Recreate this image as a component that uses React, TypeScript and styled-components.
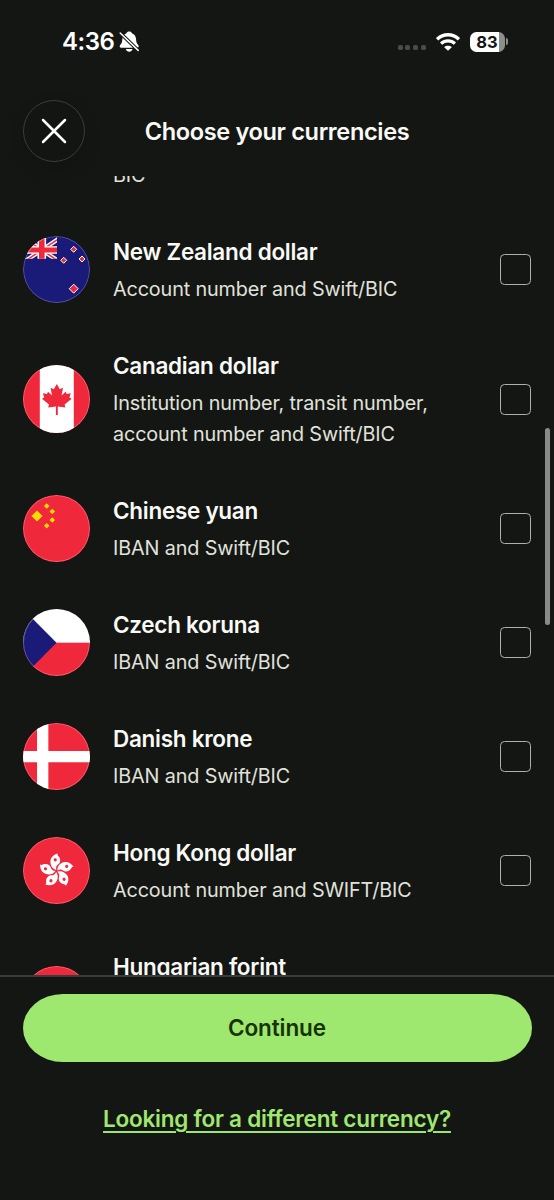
import React from "react";
import styled, { createGlobalStyle } from "styled-components";

const GlobalStyle = createGlobalStyle`
  * { box-sizing: border-box; }
  html, body { margin: 0; background: #141613; }
  body { font-family: Inter, "Liberation Sans", sans-serif; color: #f9faf6; }
`;

const Screen = styled.div`
  width: 554px;
  height: 1200px;
  display: flex;
  flex-direction: column;
  overflow: hidden;
  background: #141613;
`;

const StatusBar = styled.header`
  height: 82px;
  flex: none;
  display: flex;
  align-items: center;
  justify-content: space-between;
  padding: 1px 46.5px 0 62px;
`;

const StatusGroup = styled.div`
  display: flex;
  align-items: center;
`;

const Clock = styled.span`
  font-size: 24px;
  font-weight: 600;
  line-height: 30px;
  letter-spacing: -0.5px;
  margin-right: 5px;
  padding-top: 1px;
  color: #fff;
`;

const Dots = styled.div`
  display: flex;
  gap: 2.6px;
  margin: 12px 10px 0 0;
`;

const Dot = styled.i`
  width: 5px;
  height: 5px;
  border-radius: 1.8px;
  background: #4a4c49;
`;

const BatteryWrap = styled.div`
  display: flex;
  align-items: center;
  gap: 1px;
  margin-left: 10px;
`;

const Battery = styled.div`
  width: 35px;
  height: 20px;
  border-radius: 6.5px;
  background: linear-gradient(90deg, #fff 29px, #8d8e8c 29px);
  color: #141613;
  font-size: 16.5px;
  font-weight: 700;
  line-height: 20px;
  text-align: center;
`;

const BatteryNub = styled.i`
  width: 2px;
  height: 7px;
  border-radius: 0 3px 3px 0;
  background: #8d8e8c;
`;

const TitleBar = styled.div`
  height: 94px;
  flex: none;
  display: grid;
  grid-template-columns: 62px 1fr 62px;
  align-items: start;
  padding: 18px 22.5px 0;
`;

const CloseButton = styled.button`
  width: 62px;
  height: 62px;
  display: grid;
  place-items: center;
  padding: 0;
  border: 1px solid #3b3d3a;
  border-radius: 50%;
  background: #131512;
  box-shadow: 0 6px 16px rgba(0, 0, 0, 0.14);
`;

const Title = styled.h1`
  margin: 0;
  font-size: 23.6px;
  font-weight: 600;
  line-height: 64px;
  letter-spacing: -0.37px;
  text-align: center;
  white-space: nowrap;
`;

const ListFrame = styled.main`
  position: relative;
  height: 799px;
  flex: none;
  overflow: hidden;
`;

const ScrollThumb = styled.div`
  position: absolute;
  top: 251.5px;
  right: 4px;
  width: 5px;
  height: 197px;
  border-radius: 3px;
  background: #8a8b89;
`;

const Row = styled.div<{ $lines: number }>`
  height: ${(p) => 83 + p.$lines * 31}px;
  display: flex;
  align-items: center;
  padding: 0 23px 0 22.5px;
`;

const RowTail = styled.div`
  height: 36.5px;
  display: flex;
  align-items: flex-end;
  padding: 0 22px 21.6px 113px;
`;

const FlagFrame = styled.div`
  position: relative;
  width: 67.5px;
  height: 67.5px;
  flex: none;
  border-radius: 50%;
  overflow: hidden;
  svg { display: block; }
  &::after {
    content: "";
    position: absolute;
    inset: 0;
    border-radius: 50%;
    border: 1.3px solid rgba(255, 255, 255, 0.27);
  }
`;

const RowText = styled.div`
  flex: 1;
  align-self: flex-start;
  padding-top: 22.7px;
  margin-left: 23px;
`;

const CurrencyName = styled.h2`
  margin: 0 0 4.8px;
  font-size: 22.5px;
  font-weight: 600;
  line-height: 34px;
  letter-spacing: -0.28px;
`;

const Detail = styled.p`
  margin: 0;
  font-size: 19.8px;
  font-weight: 400;
  line-height: 31px;
  letter-spacing: -0.13px;
  color: #e0e2dc;
  white-space: pre-line;
`;

const Checkbox = styled.span`
  width: 31px;
  height: 31px;
  flex: none;
  border: 1.5px solid #aeb0ac;
  border-radius: 4.5px;
`;

const Footer = styled.footer`
  flex: 1;
  border-top: 2px solid #3a3c39;
  padding: 17px 22.5px 0;
  display: flex;
  flex-direction: column;
  align-items: center;
`;

const ContinueButton = styled.button`
  width: 100%;
  height: 68px;
  border: 0;
  padding: 0 0 1px;
  border-radius: 40px / 34px;
  background: #9fe870;
  color: #163300;
  font: 600 22.5px/66px Inter, "Liberation Sans", sans-serif;
  letter-spacing: -0.1px;
`;

const HelpLink = styled.a`
  margin-top: 41px;
  font-size: 22.5px;
  font-weight: 600;
  line-height: 32px;
  letter-spacing: -0.23px;
  color: #9fe870;
  text-decoration: underline;
  text-decoration-thickness: 1.6px;
  text-underline-offset: 3.5px;
  white-space: nowrap;
`;

const RED = "#f0283c";
const BLUE = "#1a1a78";

const Flag = ({ children }: { children: React.ReactNode }) => (
  <FlagFrame>
    <svg width="67.5" height="67.5" viewBox="0 0 67.5 67.5">{children}</svg>
  </FlagFrame>
);

const diamond = (x: number, y: number, r: number) =>
  `M${x} ${y - r}L${x + r} ${y}L${x} ${y + r}L${x - r} ${y}Z`;

const NewZealand = () => (
  <Flag>
    <rect width="68" height="68" fill={BLUE} />
    <svg width="34" height="22.8" viewBox="0 0 34 22.8">
      <path d="M0.8 2L36.8 26M36.8 2L0.8 26" stroke="#fff" strokeWidth="4.2" />
      <path d="M0.8 2L36.8 26M36.8 2L0.8 26" stroke={RED} strokeWidth="1.5" />
      <path d="M18.8 0V23" stroke="#fff" strokeWidth="8.6" />
      <path d="M0 14H34" stroke="#fff" strokeWidth="7.6" />
      <path d="M18.8 0V23" stroke={RED} strokeWidth="5.6" />
      <path d="M0 14H34" stroke={RED} strokeWidth="4.8" />
    </svg>
    {[[50.7, 13.3, 3], [40.7, 24.3, 3], [59, 23, 3], [50.7, 52.7, 4.5]].map(([x, y, r]) => (
      <path key={`${x}-${y}`} d={diamond(x, y, r)} fill={RED} stroke="#fff" strokeWidth="1" />
    ))}
  </Flag>
);

const Canada = () => (
  <Flag>
    <rect width="68" height="68" fill={RED} />
    <rect x="16.8" width="34" height="68" fill="#fff" />
    <path
      fill={RED}
      d="M33.8 19L30.8 24.2L27.6 22.7L29 30.6L25 26.8L24 29L19.9 28.2L21.2 32.5L19 33.8L26 39.6L25.2 42.6L32.9 41.5V50H34.8V41.5L42.4 42.6L41.6 39.6L48.7 33.8L46.4 32.5L47.7 28.2L43.7 29L42.6 26.8L38.6 30.6L40 22.7L36.8 24.2Z"
    />
  </Flag>
);

const China = () => (
  <Flag>
    <rect width="68" height="68" fill={RED} />
    {[[14, 21, 5.6], [23.7, 11, 2.8], [29.3, 16.5, 2.8], [29.3, 25, 2.8], [23.7, 30.7, 2.8]].map(([x, y, r]) => (
      <path key={`${x}-${y}`} d={diamond(x, y, r)} fill="#ffda00" />
    ))}
  </Flag>
);

const Czechia = () => (
  <Flag>
    <rect width="68" height="34" fill="#fff" />
    <rect y="33.7" width="68" height="34" fill={RED} />
    <path d="M0 0L33.5 33.7L0 67.5Z" fill={BLUE} />
  </Flag>
);

const Denmark = () => (
  <Flag>
    <rect width="68" height="68" fill={RED} />
    <path d="M19.7 0V68M0 33.7H68" stroke="#fff" strokeWidth="11.3" />
  </Flag>
);

const HongKong = () => (
  <Flag>
    <rect width="68" height="68" fill={RED} />
    {[0, 72, 144, 216, 288].map((angle) => (
      <g key={angle} transform={`rotate(${angle - 6} 33.5 34)`}>
        <path
          fill="#fff"
          d="M33.4 33C29.8 31.5 28 28 28.4 24.2C28.8 20.2 31.8 17.6 36.4 16.6C35.9 18 36.6 18.7 37.4 20C39.2 23 38.2 26.4 35.6 27.8C34 28.8 33 30.5 33.4 33Z"
        />
        <circle cx="33.4" cy="22.8" r="1.6" fill={RED} />
      </g>
    ))}
  </Flag>
);

const Hungary = () => (
  <Flag>
    <rect width="68" height="68" fill={RED} />
    <rect y="22.5" width="68" height="45" fill="#fff" />
    <rect y="45" width="68" height="23" fill="#4b8b3b" />
  </Flag>
);

const currencies = [
  { name: "New Zealand dollar", detail: "Account number and Swift/BIC", lines: 1, flag: <NewZealand /> },
  { name: "Canadian dollar", detail: "Institution number, transit number,\naccount number and Swift/BIC", lines: 2, flag: <Canada /> },
  { name: "Chinese yuan", detail: "IBAN and Swift/BIC", lines: 1, flag: <China /> },
  { name: "Czech koruna", detail: "IBAN and Swift/BIC", lines: 1, flag: <Czechia /> },
  { name: "Danish krone", detail: "IBAN and Swift/BIC", lines: 1, flag: <Denmark /> },
  { name: "Hong Kong dollar", detail: "Account number and SWIFT/BIC", lines: 1, flag: <HongKong /> },
  { name: "Hungarian forint", detail: "", lines: 2, flag: <Hungary /> },
];

const BellSlash = () => (
  <svg width="21" height="22" viewBox="0 0 21 22">
    <path
      fill="#fff"
      d="M10.2 0.6C11.6 0.6 12.6 1.3 12.9 2.3C15.6 3.2 17 5.6 17.1 8.6C17.2 11.4 17.8 12.6 19.2 14C20.2 15.1 19.8 16.8 18.2 16.8H2.2C0.6 16.8 0.2 15.1 1.2 14C2.6 12.6 3.2 11.4 3.3 8.6C3.4 5.6 4.8 3.2 7.5 2.3C7.8 1.3 8.8 0.6 10.2 0.6ZM6.8 18.1H13.6C13.2 19.8 11.9 20.7 10.2 20.7C8.5 20.7 7.2 19.8 6.8 18.1Z"
    />
    <path d="M0.4 1.2L20 20.2" stroke="#141613" strokeWidth="3.6" />
    <path d="M1.2 2L19.2 19.4" stroke="#fff" strokeWidth="1.5" strokeLinecap="round" />
  </svg>
);

const Wifi = () => (
  <svg width="24" height="18" viewBox="0 0 24 18">
    <g fill="none" stroke="#fff" strokeWidth="3.3">
      <path d="M1.1 6.3C7.3 0.2 16.7 0.2 22.9 6.3" />
      <path d="M5.1 10.6C9 6.9 15 6.9 18.9 10.6" />
    </g>
    <path d="M12 17.8L8.2 14.2C10.2 12.3 13.8 12.3 15.8 14.2Z" fill="#fff" />
  </svg>
);

export default function App() {
  return (
    <>
      <GlobalStyle />
      <Screen>
        <StatusBar>
          <StatusGroup>
            <Clock>4:36</Clock>
            <BellSlash />
          </StatusGroup>
          <StatusGroup>
            <Dots><Dot /><Dot /><Dot /><Dot /></Dots>
            <Wifi />
            <BatteryWrap>
              <Battery>83</Battery>
              <BatteryNub />
            </BatteryWrap>
          </StatusGroup>
        </StatusBar>
        <TitleBar>
          <CloseButton aria-label="Close">
            <svg width="26" height="26" viewBox="0 0 26 26">
              <path d="M2 2L24 24M24 2L2 24" stroke="#fff" strokeWidth="2.5" strokeLinecap="round" />
            </svg>
          </CloseButton>
          <Title>Choose your currencies</Title>
        </TitleBar>
        <ListFrame>
          <RowTail><Detail>BIC</Detail></RowTail>
          {currencies.map((c) => (
            <Row key={c.name} $lines={c.lines}>
              {c.flag}
              <RowText>
                <CurrencyName>{c.name}</CurrencyName>
                {c.detail && <Detail>{c.detail}</Detail>}
              </RowText>
              <Checkbox />
            </Row>
          ))}
          <ScrollThumb />
        </ListFrame>
        <Footer>
          <ContinueButton>Continue</ContinueButton>
          <HelpLink>Looking for a different currency?</HelpLink>
        </Footer>
      </Screen>
    </>
  );
}
